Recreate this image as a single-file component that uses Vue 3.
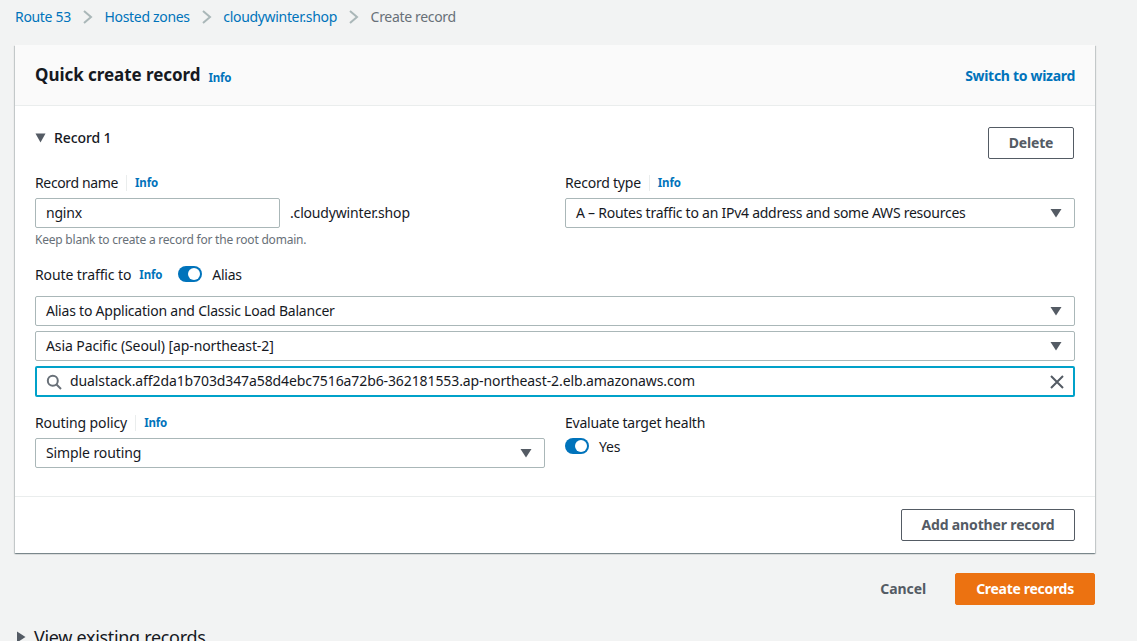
<script setup>
const crumbs = ['Route 53', 'Hosted zones', 'cloudywinter.shop']
</script>

<template>
  <div class="page">
    <nav class="crumbs">
      <template v-for="c in crumbs" :key="c">
        <a class="crumb">{{ c }}</a>
        <svg class="sep" width="12" height="16" viewBox="0 0 12 16"><path d="M2 2l7 6-7 6" fill="none" stroke="#aab7b8" stroke-width="2"/></svg>
      </template>
      <span class="current">Create record</span>
    </nav>

    <section class="card">
      <header class="card-head">
        <h2>Quick create record</h2>
        <a class="info head-info">Info</a>
        <a class="wizard">Switch to wizard</a>
      </header>

      <div class="card-body">
        <div class="record-row">
          <div class="record-title">
            <svg width="11" height="10" viewBox="0 0 11 10"><path d="M0.5 0.5h10L5.5 9.5z" fill="#545b64"/></svg>
            <span>Record 1</span>
          </div>
          <button class="btn delete">Delete</button>
        </div>

        <div class="two">
          <div>
            <div class="label"><span class="tight">Record name</span><i class="bar"></i><a class="info">Info</a></div>
            <div class="name-row">
              <div class="field name-input">nginx</div>
              <span class="suffix">.cloudywinter.shop</span>
            </div>
            <div class="hint">Keep blank to create a record for the root domain.</div>
          </div>
          <div>
            <div class="label"><span>Record type</span><i class="bar"></i><a class="info">Info</a></div>
            <div class="field select">
              <span class="type-text">A – Routes traffic to an IPv4 address and some AWS resources</span>
              <svg class="caret" width="12" height="10" viewBox="0 0 12 10"><path d="M0.5 1h11L6 9.5z" fill="#545b64"/></svg>
            </div>
          </div>
        </div>

        <div class="route-row">
          <span class="loose">Route traffic to</span>
          <a class="info">Info</a>
          <span class="toggle"><i></i></span>
          <span class="toggle-text">Alias</span>
        </div>

        <div class="stack">
          <div class="field select">
            <span>Alias to Application and Classic Load Balancer</span>
            <svg class="caret" width="12" height="10" viewBox="0 0 12 10"><path d="M0.5 1h11L6 9.5z" fill="#545b64"/></svg>
          </div>
          <div class="field select">
            <span class="loose">Asia Pacific (Seoul) [ap-northeast-2]</span>
            <svg class="caret" width="12" height="10" viewBox="0 0 12 10"><path d="M0.5 1h11L6 9.5z" fill="#545b64"/></svg>
          </div>
          <div class="field search">
            <svg width="16" height="16" viewBox="0 0 16 16"><circle cx="6.8" cy="6.8" r="5" fill="none" stroke="#687078" stroke-width="2"/><path d="M10.5 10.5l4.5 4.5" stroke="#687078" stroke-width="2"/></svg>
            <span class="loose">dualstack.aff2da1b703d347a58d4ebc7516a72b6-362181553.ap-northeast-2.elb.amazonaws.com</span>
            <svg class="clear" width="16" height="16" viewBox="0 0 16 16"><path d="M2 2l12 12M14 2L2 14" stroke="#545b64" stroke-width="2"/></svg>
          </div>
        </div>

        <div class="two policy">
          <div>
            <div class="label"><span class="loose">Routing policy</span><i class="bar"></i><a class="info">Info</a></div>
            <div class="field select">
              <span class="loose">Simple routing</span>
              <svg class="caret" width="12" height="10" viewBox="0 0 12 10"><path d="M0.5 1h11L6 9.5z" fill="#545b64"/></svg>
            </div>
          </div>
          <div>
            <div class="label"><span>Evaluate target health</span></div>
            <div class="health">
              <span class="toggle"><i></i></span>
              <span class="toggle-text">Yes</span>
            </div>
          </div>
        </div>
      </div>

      <footer class="card-foot">
        <button class="btn add">Add another record</button>
      </footer>
    </section>

    <div class="actions">
      <a class="cancel">Cancel</a>
      <button class="create">Create records</button>
    </div>

    <div class="existing">
      <svg width="10" height="12" viewBox="0 0 10 12"><path d="M1 0.5v11L9.5 6z" fill="#545b64"/></svg>
      <span>View existing records</span>
    </div>
  </div>
</template>

<style>
html, body { margin: 0; height: 100%; overflow: hidden; background: #f2f3f3; }
</style>

<style scoped>
.page {
  box-sizing: border-box;
  width: 1137px;
  height: 641px;
  overflow: hidden;
  padding: 0 42px 0 15px;
  background: #f2f3f3;
  font-family: "Noto Sans", sans-serif;
  font-size: 14px;
  letter-spacing: -0.22px;
  color: #16191f;
}
.tight { letter-spacing: -0.36px; }
.loose { letter-spacing: -0.1px; }
.type-text { letter-spacing: -0.25px; }
.crumbs { display: flex; align-items: center; height: 34px; gap: 10.8px; line-height: 20px; letter-spacing: -0.32px; }
.crumb { color: #0073bb; }
.current { color: #687078; }
.sep { flex: none; }
.card {
  margin-top: 11px;
  width: 1080px;
  height: 508px;
  display: flex;
  flex-direction: column;
  background: #fff;
  box-shadow: 0 1px 1px 0 rgba(0,28,36,.3), 1px 1px 1px 0 rgba(0,28,36,.15), -1px 1px 1px 0 rgba(0,28,36,.15);
}
.card-head {
  display: flex;
  align-items: center;
  box-sizing: border-box;
  height: 61px;
  padding: 0 20px;
  background: #fafafa;
  border-bottom: 1px solid #eaeded;
}
h2 { margin: 0; font-size: 17px; font-weight: 700; line-height: 24px; letter-spacing: -0.05px; }
.info { color: #0073bb; font-size: 11.5px; font-weight: 700; letter-spacing: -0.2px; }
.head-info { margin-left: 8px; position: relative; top: 2px; }
.wizard { margin-left: auto; color: #0073bb; font-weight: 700; font-size: 14px; letter-spacing: -0.3px; }
.card-body { flex: 1; padding: 21px 20px 0; }
.record-row { display: flex; justify-content: space-between; align-items: flex-start; height: 46px; }
.record-title { display: flex; align-items: center; gap: 8px; height: 21px; font-weight: 500; letter-spacing: -0.1px; }
.btn {
  box-sizing: border-box;
  background: #fff;
  border: 1px solid #545b64;
  border-radius: 2px;
  color: #545b64;
  font: 700 14px "Noto Sans", sans-serif;
  letter-spacing: -0.15px;
  padding: 0 0 2px;
}
.delete { width: 86px; height: 32px; margin-right: 1px; }
.two { display: grid; grid-template-columns: 510px 510px; column-gap: 20px; }
.label { display: flex; align-items: center; height: 20px; line-height: 20px; margin-bottom: 5px; }
.bar { width: 1px; height: 16px; background: #eaeded; margin: 0 8px; }
.field {
  box-sizing: border-box;
  height: 30px;
  display: flex;
  align-items: center;
  border: 1px solid #aab7b8;
  border-radius: 2px;
  padding: 0 10px 2px;
  background: #fff;
}
.select { justify-content: space-between; padding-right: 12px; }
.caret { position: relative; top: 1px; }
.name-row { display: flex; align-items: center; gap: 10px; }
.name-input { width: 245px; }
.suffix { letter-spacing: -0.17px; padding-bottom: 2px; }
.hint { font-size: 12px; color: #687078; line-height: 16px; margin-top: 4px; }
.route-row { display: flex; align-items: center; height: 20px; margin-top: 16px; }
.route-row .info { margin-left: 8px; }
.route-row .toggle { margin-left: 16px; }
.toggle {
  position: relative;
  display: inline-block;
  flex: none;
  width: 24px;
  height: 16px;
  border-radius: 8px;
  background: #0073bb;
}
.toggle i {
  position: absolute;
  top: 2px;
  right: 2px;
  width: 12px;
  height: 12px;
  border-radius: 50%;
  background: #fff;
}
.toggle-text { margin-left: 10px; }
.stack { display: flex; flex-direction: column; gap: 5px; margin-top: 12px; }
.search {
  height: 31px;
  border: 2px solid #00a1c9;
  padding: 0 8px 2px 9px;
  gap: 8px;
}
.search svg { position: relative; top: 1px; }
.clear { margin-left: auto; }
.policy { margin-top: 16px; }
.health { display: flex; align-items: center; height: 20px; margin-top: -2px; }
.card-foot {
  box-sizing: border-box;
  height: 57px;
  padding: 12px 20px 0;
  border-top: 1px solid #eaeded;
  display: flex;
  justify-content: flex-end;
}
.add { width: 174px; height: 32px; }
.actions { display: flex; justify-content: flex-end; align-items: center; margin-top: 20px; gap: 29px; }
.cancel { color: #545b64; font-weight: 700; padding-bottom: 1px; letter-spacing: -0.1px; }
.create {
  box-sizing: border-box;
  width: 140px;
  height: 32px;
  background: #ec7211;
  border: 1px solid #ec7211;
  border-radius: 2px;
  color: #fff;
  font: 700 14px "Noto Sans", sans-serif;
  letter-spacing: -0.3px;
  padding: 0 0 2px;
}
.existing { display: flex; align-items: center; gap: 8px; margin-top: 18px; margin-left: 1px; font-size: 18px; line-height: 28px; letter-spacing: -0.32px; }
</style>
